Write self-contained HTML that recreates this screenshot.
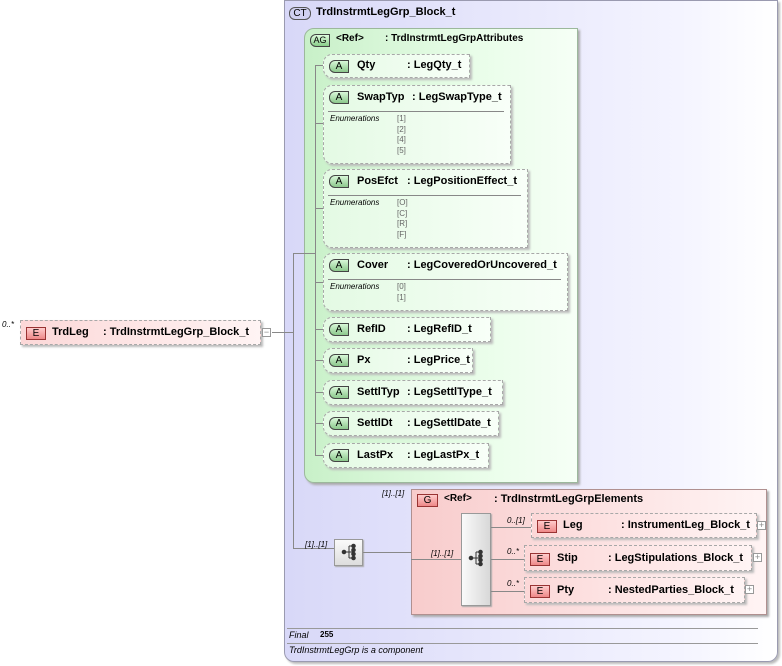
<!DOCTYPE html>
<html><head><style>
*{margin:0;padding:0;box-sizing:border-box}
body{width:782px;height:666px;background:#fff;position:relative;overflow:hidden;font-family:"Liberation Sans",Arial,sans-serif;font-size:11px;color:#000}
.a{position:absolute}
.b{font-weight:bold}
.ct{left:284px;top:0;width:494px;height:662px;border:1px solid #9a9ab0;border-radius:0 0 10px 10px;background:linear-gradient(90deg,#d8d8f8,#f4f4ff 80%,#fff);box-shadow:2px 2px 2px #bbb}
.ag{left:304px;top:28px;width:274px;height:455px;border:1px solid #9cb89c;border-radius:10px 0 0 10px;background:linear-gradient(90deg,#c8f0c8,#e8fde8 60%,#f6fff6);box-shadow:2px 2px 2px #aaa}
.at{left:323px;border:1px dashed #a8a8a8;border-radius:9px 0 0 9px;background:linear-gradient(90deg,#e4fae4,#f8fff8);box-shadow:2px 2px 2px #bbb}
.badge{position:absolute;height:13px;font-size:10px;line-height:11px;text-align:center;border:1px solid #444}
.ab{left:5px;top:5px;width:20px;background:linear-gradient(#d8f8d8,#8cc88c);border-radius:6px 0 0 6px}
.eb{width:20px;background:linear-gradient(#fcc,#e88);border-color:#933}
.sep{position:absolute;left:4px;height:1px;background:#888}
.en{position:absolute;left:6px;font-size:8px;font-style:italic}
.ev{position:absolute;left:73px;font-size:8px;color:#666;line-height:10.5px}
.ln{position:absolute;background:#888}
.el{border:1px dashed #a8a8a8;background:linear-gradient(90deg,#fcd8d8,#fff4f4);box-shadow:2px 2px 2px #bbb}
.m{font-size:8px;font-style:italic}
.plus{position:absolute;width:9px;height:9px;border:1px solid #999;background:#fff;font-size:9px;line-height:7px;text-align:center;color:#888}
</style></head><body>
<div class="a ct"></div>
<div class="badge" style="left:289px;top:7px;width:22px;border-radius:6px;background:#d0d0f0;border-color:#555">CT</div>
<div class="a b" style="left:316px;top:6px">TrdInstrmtLegGrp_Block_t</div>

<div class="a ag"></div>
<div class="badge" style="left:310px;top:34px;width:20px;border-radius:6px 0 0 6px;background:linear-gradient(#e0ffe0,#8c8);font-size:9px">AG</div>
<div class="a b" style="left:336px;top:33px;font-size:10px">&lt;Ref&gt;</div>
<div class="a b" style="left:385px;top:33px;font-size:10px">: TrdInstrmtLegGrpAttributes</div>

<div class="ln" style="left:315px;top:65px;width:1px;height:391px"></div>
<div class="ln" style="left:315px;top:65px;width:8px;height:1px"></div>
<div class="ln" style="left:315px;top:123px;width:8px;height:1px"></div>
<div class="ln" style="left:315px;top:208px;width:8px;height:1px"></div>
<div class="ln" style="left:315px;top:282px;width:8px;height:1px"></div>
<div class="ln" style="left:315px;top:329px;width:8px;height:1px"></div>
<div class="ln" style="left:315px;top:360px;width:8px;height:1px"></div>
<div class="ln" style="left:315px;top:392px;width:8px;height:1px"></div>
<div class="ln" style="left:315px;top:423px;width:8px;height:1px"></div>
<div class="ln" style="left:315px;top:455px;width:8px;height:1px"></div>

<div class="a at" style="top:54px;width:147px;height:24px"><div class="badge ab">A</div><div class="a b" style="left:33px;top:4px">Qty</div><div class="a b" style="left:83px;top:4px">: LegQty_t</div></div>
<div class="a at" style="top:85px;width:188px;height:79px"><div class="badge ab">A</div><div class="a b" style="left:33px;top:5px">SwapTyp</div><div class="a b" style="left:88px;top:5px">: LegSwapType_t</div><div class="sep" style="top:25px;width:176px"></div><div class="en" style="top:28px">Enumerations</div><div class="ev" style="top:28px">[1]<br>[2]<br>[4]<br>[5]</div></div>
<div class="a at" style="top:169px;width:205px;height:79px"><div class="badge ab">A</div><div class="a b" style="left:33px;top:5px">PosEfct</div><div class="a b" style="left:83px;top:5px">: LegPositionEffect_t</div><div class="sep" style="top:25px;width:193px"></div><div class="en" style="top:28px">Enumerations</div><div class="ev" style="top:28px">[O]<br>[C]<br>[R]<br>[F]</div></div>
<div class="a at" style="top:253px;width:245px;height:58px"><div class="badge ab">A</div><div class="a b" style="left:33px;top:5px">Cover</div><div class="a b" style="left:83px;top:5px">: LegCoveredOrUncovered_t</div><div class="sep" style="top:25px;width:233px"></div><div class="en" style="top:28px">Enumerations</div><div class="ev" style="top:28px">[0]<br>[1]</div></div>
<div class="a at" style="top:317px;width:168px;height:25px"><div class="badge ab">A</div><div class="a b" style="left:33px;top:5px">RefID</div><div class="a b" style="left:83px;top:5px">: LegRefID_t</div></div>
<div class="a at" style="top:348px;width:150px;height:25px"><div class="badge ab">A</div><div class="a b" style="left:33px;top:5px">Px</div><div class="a b" style="left:83px;top:5px">: LegPrice_t</div></div>
<div class="a at" style="top:380px;width:180px;height:25px"><div class="badge ab">A</div><div class="a b" style="left:33px;top:5px">SettlTyp</div><div class="a b" style="left:83px;top:5px">: LegSettlType_t</div></div>
<div class="a at" style="top:411px;width:176px;height:25px"><div class="badge ab">A</div><div class="a b" style="left:33px;top:5px">SettlDt</div><div class="a b" style="left:83px;top:5px">: LegSettlDate_t</div></div>
<div class="a at" style="top:443px;width:166px;height:25px"><div class="badge ab">A</div><div class="a b" style="left:33px;top:5px">LastPx</div><div class="a b" style="left:83px;top:5px">: LegLastPx_t</div></div>

<!-- TrdLeg -->
<div class="a m" style="left:2px;top:320px">0..*</div>
<div class="a el" style="left:20px;top:320px;width:241px;height:25px"><div class="badge eb" style="left:5px;top:6px">E</div><div class="a b" style="left:31px;top:5px">TrdLeg</div><div class="a b" style="left:82px;top:5px">: TrdInstrmtLegGrp_Block_t</div></div>
<div class="plus" style="left:262px;top:328px">−</div>
<div class="ln" style="left:272px;top:332px;width:21px;height:1px"></div>
<div class="ln" style="left:293px;top:253px;width:1px;height:296px"></div>
<div class="ln" style="left:293px;top:253px;width:22px;height:1px"></div>
<div class="ln" style="left:293px;top:548px;width:41px;height:1px"></div>
<div class="a m" style="left:305px;top:540px">[1]..[1]</div>

<!-- seq compositor -->
<div class="a" style="left:334px;top:539px;width:29px;height:27px;border:1px solid #999;background:linear-gradient(#fafafa,#ddd);box-shadow:1px 1px 1px #aaa"></div>
<svg class="a" style="left:339px;top:543px" width="20" height="20"><g fill="#333" stroke="#333"><circle cx="5" cy="9" r="1.8"/><line x1="5" y1="9" x2="10" y2="9"/><line x1="10" y1="3" x2="10" y2="15"/><line x1="10" y1="3" x2="14" y2="3"/><line x1="10" y1="9" x2="14" y2="9"/><line x1="10" y1="15" x2="14" y2="15"/><circle cx="14.5" cy="3" r="1.8"/><circle cx="14.5" cy="7" r="1.8"/><circle cx="14.5" cy="11" r="1.8"/><circle cx="14.5" cy="15" r="1.8"/></g></svg>
<div class="ln" style="left:363px;top:552px;width:48px;height:1px"></div>

<!-- G box -->
<div class="a m" style="left:382px;top:489px">[1]..[1]</div>
<div class="a" style="left:411px;top:489px;width:356px;height:126px;border:1px solid #b09090;background:linear-gradient(90deg,#f8cccc,#fde8e8 70%,#fff4f4);box-shadow:2px 2px 2px #aaa"></div>
<div class="badge eb" style="left:417px;top:494px;width:21px">G</div>
<div class="a b" style="left:444px;top:493px;font-size:10px">&lt;Ref&gt;</div>
<div class="a b" style="left:494px;top:493px">: TrdInstrmtLegGrpElements</div>
<div class="ln" style="left:411px;top:559px;width:50px;height:1px"></div>
<div class="a m" style="left:431px;top:549px">[1]..[1]</div>
<div class="a" style="left:461px;top:513px;width:30px;height:93px;border:1px solid #999;background:linear-gradient(90deg,#fafafa,#d8d8d8);box-shadow:1px 1px 1px #aaa"></div>
<svg class="a" style="left:466px;top:549px" width="20" height="20"><g fill="#333" stroke="#333"><circle cx="5" cy="9" r="1.8"/><line x1="5" y1="9" x2="10" y2="9"/><line x1="10" y1="3" x2="10" y2="15"/><line x1="10" y1="3" x2="14" y2="3"/><line x1="10" y1="9" x2="14" y2="9"/><line x1="10" y1="15" x2="14" y2="15"/><circle cx="14.5" cy="3" r="1.8"/><circle cx="14.5" cy="7" r="1.8"/><circle cx="14.5" cy="11" r="1.8"/><circle cx="14.5" cy="15" r="1.8"/></g></svg>
<div class="ln" style="left:491px;top:527px;width:40px;height:1px"></div>
<div class="ln" style="left:491px;top:559px;width:33px;height:1px"></div>
<div class="ln" style="left:491px;top:591px;width:33px;height:1px"></div>
<div class="a m" style="left:507px;top:516px">0..[1]</div>
<div class="a m" style="left:507px;top:547px">0..*</div>
<div class="a m" style="left:507px;top:579px">0..*</div>

<div class="a el" style="left:531px;top:513px;width:226px;height:25px"><div class="badge eb" style="left:5px;top:6px">E</div><div class="a b" style="left:31px;top:5px">Leg</div><div class="a b" style="left:89px;top:5px">: InstrumentLeg_Block_t</div></div>
<div class="plus" style="left:757px;top:521px">+</div>
<div class="a el" style="left:524px;top:545px;width:228px;height:26px"><div class="badge eb" style="left:5px;top:7px">E</div><div class="a b" style="left:32px;top:6px">Stip</div><div class="a b" style="left:83px;top:6px">: LegStipulations_Block_t</div></div>
<div class="plus" style="left:753px;top:553px">+</div>
<div class="a el" style="left:524px;top:577px;width:221px;height:26px"><div class="badge eb" style="left:5px;top:7px">E</div><div class="a b" style="left:32px;top:6px">Pty</div><div class="a b" style="left:83px;top:6px">: NestedParties_Block_t</div></div>
<div class="plus" style="left:745px;top:585px">+</div>

<!-- footer -->
<div class="ln" style="left:287px;top:628px;width:471px;height:1px;background:#999"></div>
<div class="a" style="left:289px;top:630px;font-size:9px;font-style:italic">Final</div>
<div class="a b" style="left:320px;top:630px;font-size:8px">255</div>
<div class="ln" style="left:287px;top:643px;width:471px;height:1px;background:#999"></div>
<div class="a" style="left:289px;top:645px;font-size:9px;font-style:italic">TrdInstrmtLegGrp is a component</div>
</body></html>
